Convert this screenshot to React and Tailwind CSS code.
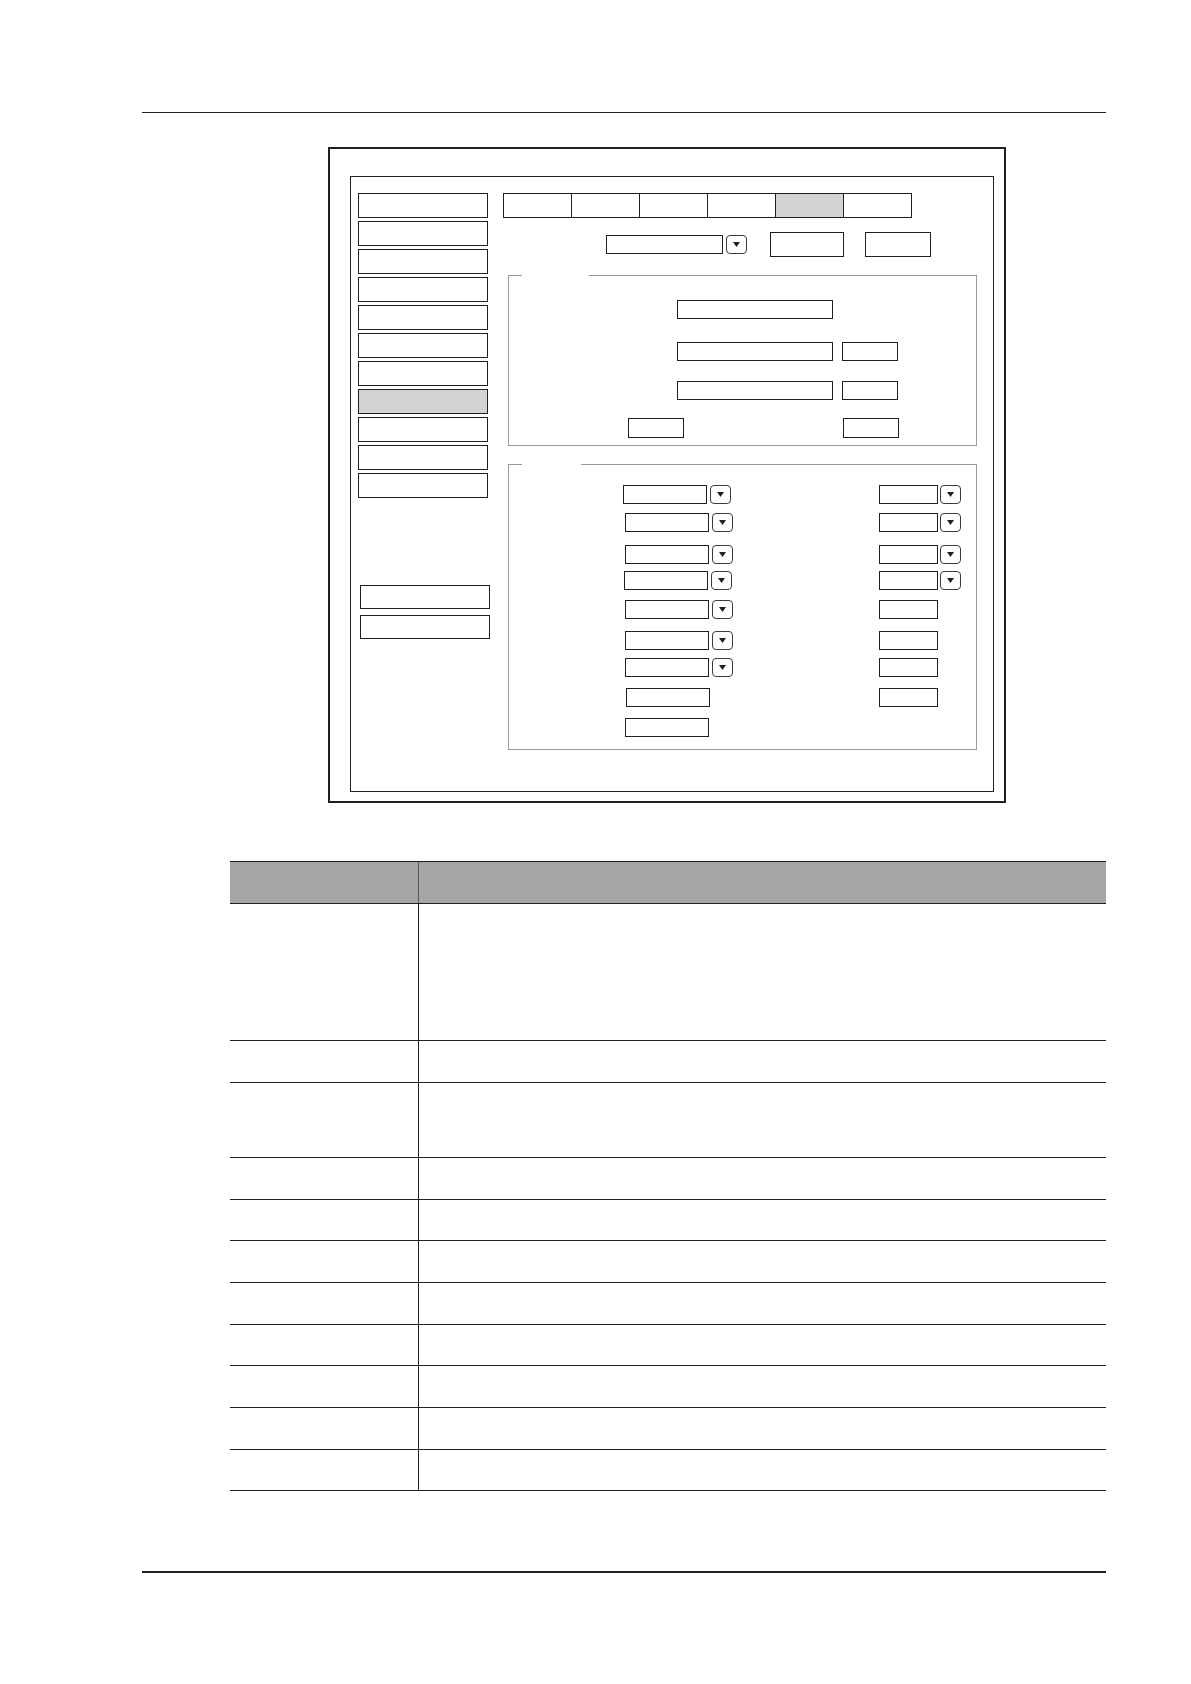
import React from 'react';

const Arrow = ({ className = '' }) => (
  <div className={`flex h-[19px] w-[21px] items-center justify-center rounded-[4px] border border-[#3b3b3b] bg-white ${className}`}>
    <svg width="7" height="5" viewBox="0 0 7 5">
      <path d="M0 0H7L3.5 5Z" fill="#231f20" />
    </svg>
  </div>
);

const Field = ({ className = '' }) => (
  <div className={`border border-[#231f20] bg-white ${className}`} />
);

const tabs = [false, false, false, false, true, false];
const sideItems = [false, false, false, false, false, false, false, true, false, false, false];

// second group: spacing and the small misalignments of the original drawing
const settingRows = [
  { top: 'mt-[20px]', shift: 'ml-[-2px]', leftArrow: true, right: 'arrow' },
  { top: 'mt-[9px]', shift: 'ml-0', leftArrow: true, right: 'arrow' },
  { top: 'mt-[13px]', shift: 'ml-0', leftArrow: true, right: 'arrow' },
  { top: 'mt-[7px]', shift: 'ml-[-1px]', leftArrow: true, right: 'arrow' },
  { top: 'mt-[10px]', shift: 'ml-0', leftArrow: true, right: 'plain' },
  { top: 'mt-[12px]', shift: 'ml-0', leftArrow: true, right: 'plain' },
  { top: 'mt-[8px]', shift: 'ml-0', leftArrow: true, right: 'plain' },
  { top: 'mt-[11px]', shift: 'ml-[1px]', leftArrow: false, right: 'plain' },
  { top: 'mt-[11px]', shift: 'ml-0', leftArrow: false, right: null },
];

const tableRows = [
  'h-[137px]',
  'h-[42px]',
  'h-[75px]',
  'h-[42px]',
  'h-[41px]',
  'h-[42px]',
  'h-[42px]',
  'h-[41px]',
  'h-[42px]',
  'h-[42px]',
  'h-[41px]',
];

export default function App() {
  return (
    <div className="flex h-[1684px] w-[1191px] flex-col bg-white pt-[112px] font-['Liberation_Sans',sans-serif]">
      {/* page header rule */}
      <div className="ml-[142px] h-px w-[964px] bg-[#231f20]" />

      {/* screen figure */}
      <div className="ml-[328px] mt-[34px] h-[656px] w-[678px] border-2 border-[#231f20] pl-[20px] pt-[27px]">
        <div className="flex h-[616px] w-[644px] border border-[#231f20] pl-[7px] pt-[16px]">
          {/* left menu */}
          <div className="flex w-[130px] flex-col">
            <div className="flex flex-col gap-[3px]">
              {sideItems.map((active, i) => (
                <div
                  key={i}
                  className={`h-[25px] w-[130px] border border-[#231f20] ${active ? 'bg-[#d3d3d3]' : 'bg-white'}`}
                />
              ))}
            </div>
            <div className="ml-[2px] mt-[87px] flex flex-col gap-[6px]">
              <Field className="h-6 w-[130px]" />
              <Field className="h-6 w-[130px]" />
            </div>
          </div>

          {/* right content */}
          <div className="ml-[15px] flex flex-col">
            <div className="flex">
              {tabs.map((active, i) => (
                <div
                  key={i}
                  className={`h-[25px] w-[69px] border border-[#231f20] ${i > 0 ? '-ml-px' : ''} ${active ? 'bg-[#d3d3d3]' : 'bg-white'}`}
                />
              ))}
            </div>

            <div className="mt-[14px] flex h-[25px] items-center">
              <Field className="ml-[103px] h-[19px] w-[117px]" />
              <Arrow className="ml-[3px]" />
              <Field className="ml-[23px] h-[25px] w-[74px]" />
              <Field className="ml-[21px] h-[25px] w-[66px]" />
            </div>

            {/* first group */}
            <fieldset className="ml-[5px] mt-[18px] h-[171px] w-[469px] border border-[#9a9a9a]">
              <legend className="ml-[13px] h-0 w-[67px]" />
              <div className="ml-[168px] mt-[24px] flex">
                <Field className="h-[19px] w-[156px]" />
              </div>
              <div className="ml-[168px] mt-[23px] flex">
                <Field className="h-[19px] w-[156px]" />
                <Field className="ml-[9px] h-[19px] w-[56px]" />
              </div>
              <div className="ml-[168px] mt-[20px] flex">
                <Field className="h-[19px] w-[156px]" />
                <Field className="ml-[9px] h-[19px] w-[56px]" />
              </div>
              <div className="ml-[119px] mt-[18px] flex">
                <Field className="h-[20px] w-[56px]" />
                <Field className="ml-[159px] h-[20px] w-[56px]" />
              </div>
            </fieldset>

            {/* second group */}
            <fieldset className="ml-[5px] mt-[18px] h-[286px] w-[469px] border border-[#9a9a9a]">
              <legend className="ml-[13px] h-0 w-[59px]" />
              {settingRows.map((row, i) => (
                <div key={i} className={`flex ${row.top}`}>
                  <div className="flex w-[370px] pl-[116px]">
                    <Field className={`h-[19px] w-[84px] ${row.shift}`} />
                    {row.leftArrow && <Arrow className="ml-[3px]" />}
                  </div>
                  {row.right && (
                    <div className="flex">
                      <Field className="h-[19px] w-[59px]" />
                      {row.right === 'arrow' && <Arrow className="ml-[2px]" />}
                    </div>
                  )}
                </div>
              ))}
            </fieldset>
          </div>
        </div>
      </div>

      {/* description table */}
      <div className="ml-[230px] mt-[58px] w-[876px]">
        <div className="grid h-[43px] grid-cols-[189px_1fr] border-y border-[#231f20] bg-[#a7a6a7]">
          <div className="border-r border-[#5a5a5a]" />
          <div />
        </div>
        {tableRows.map((h, i) => (
          <div key={i} className={`grid grid-cols-[189px_1fr] border-b border-[#231f20] ${h}`}>
            <div className="border-r border-[#231f20]" />
            <div />
          </div>
        ))}
      </div>

      {/* page footer rule */}
      <div className="ml-[142px] mt-[80px] h-[2px] w-[964px] bg-[#231f20]" />
    </div>
  );
}
